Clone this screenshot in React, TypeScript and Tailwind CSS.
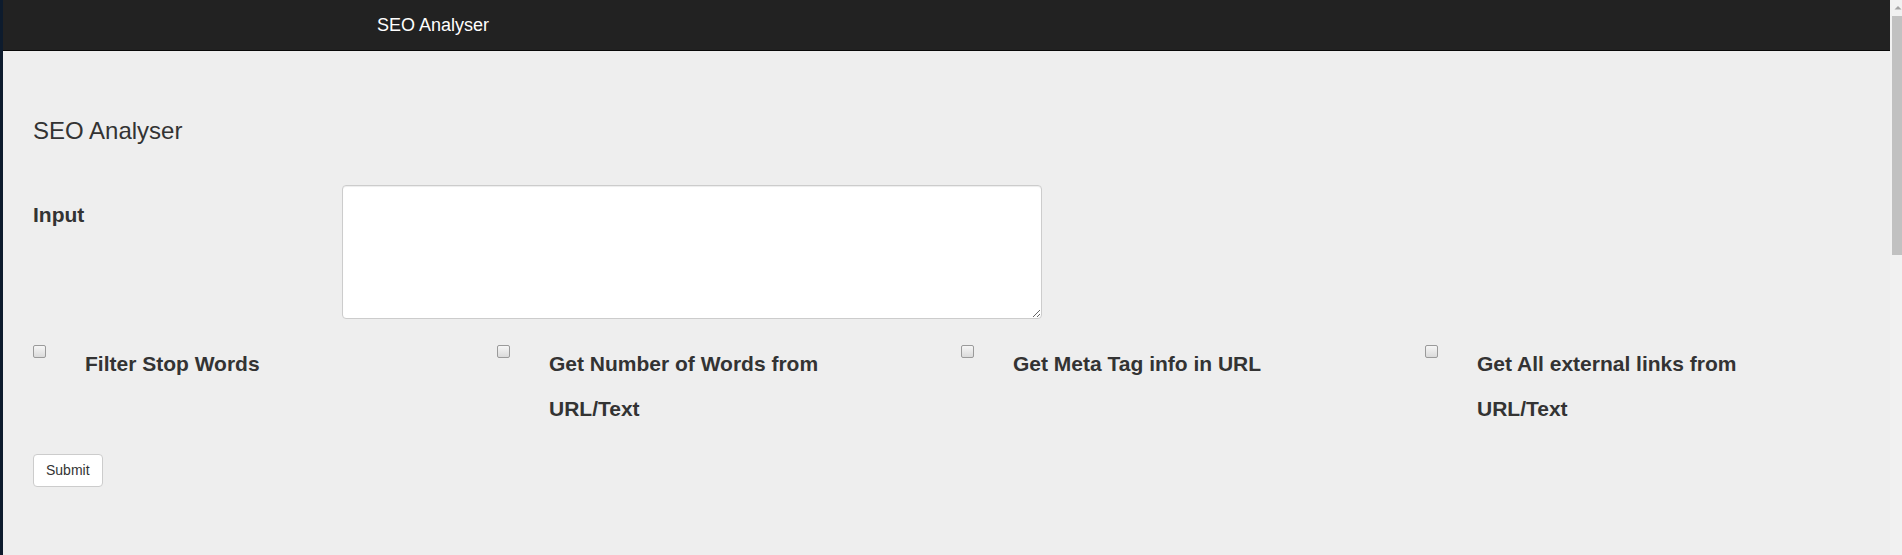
const options = [
  { id: "stop", label: "Filter Stop Words" },
  { id: "count", label: "Get Number of Words from URL/Text" },
  { id: "meta", label: "Get Meta Tag info in URL" },
  { id: "links", label: "Get All external links from URL/Text" },
];

export default function App() {
  return (
    <div className="flex h-[555px] overflow-hidden bg-[#eeeeee] font-['Liberation_Sans',Arial,sans-serif] text-[#333]">
      {/* edge of the window behind */}
      <div className="w-[3px] shrink-0 bg-[#0d1b2d]" />

      <div className="flex min-w-0 flex-1 flex-col">
        {/* Navbar */}
        <nav className="h-[51px] shrink-0 border-b border-[#080808] bg-[#222222]">
          <div className="pl-[374px] pt-[15px] text-[18px] leading-[20px] text-white">SEO Analyser</div>
        </nav>

        <main className="px-[30px]">
          <h3 className="mt-[67px] text-[24px] leading-[26px] font-normal">SEO Analyser</h3>

          {/* Input row */}
          <div className="mt-[41px] flex">
            <label htmlFor="input" className="w-[309px] shrink-0 pt-[18px] text-[21px] leading-[24px] font-bold">
              Input
            </label>
            <textarea
              id="input"
              className="h-[134px] w-[700px] rounded-[4px] border border-[#cccccc] bg-white shadow-[inset_0_1px_1px_rgba(0,0,0,0.075)] outline-none"
            />
          </div>

          {/* Options */}
          <div className="mt-[22px] grid grid-cols-[repeat(4,464px)]">
            {options.map((o) => (
              <div key={o.id} className="flex">
                <input
                  id={o.id}
                  type="checkbox"
                  className="mt-[4px] h-[13px] w-[13px] shrink-0 appearance-none rounded-[2px] border border-[#9a9a9a] bg-gradient-to-b from-[#f6f6f6] to-[#dadada]"
                />
                <label htmlFor={o.id} className="ml-[39px] w-[290px] text-[21px] leading-[45px] font-bold">
                  {o.label}
                </label>
              </div>
            ))}
          </div>

          <button className="mt-[23px] h-[33px] rounded-[4px] border border-[#cccccc] bg-white px-[12px] text-[14px] text-[#333]">
            Submit
          </button>
        </main>
      </div>

      {/* Scrollbar */}
      <div className="flex w-[12px] shrink-0 flex-col bg-[#f1f1f1]">
        <svg width="12" height="16" viewBox="0 0 12 16" className="shrink-0">
          <path d="M5 7 L8.5 10.5 L1.5 10.5 Z" fill="#a3a3a3" transform="translate(3 -1)" />
        </svg>
        <div className="ml-[2px] h-[239px] bg-[#c1c1c1]" />
      </div>
    </div>
  );
}
